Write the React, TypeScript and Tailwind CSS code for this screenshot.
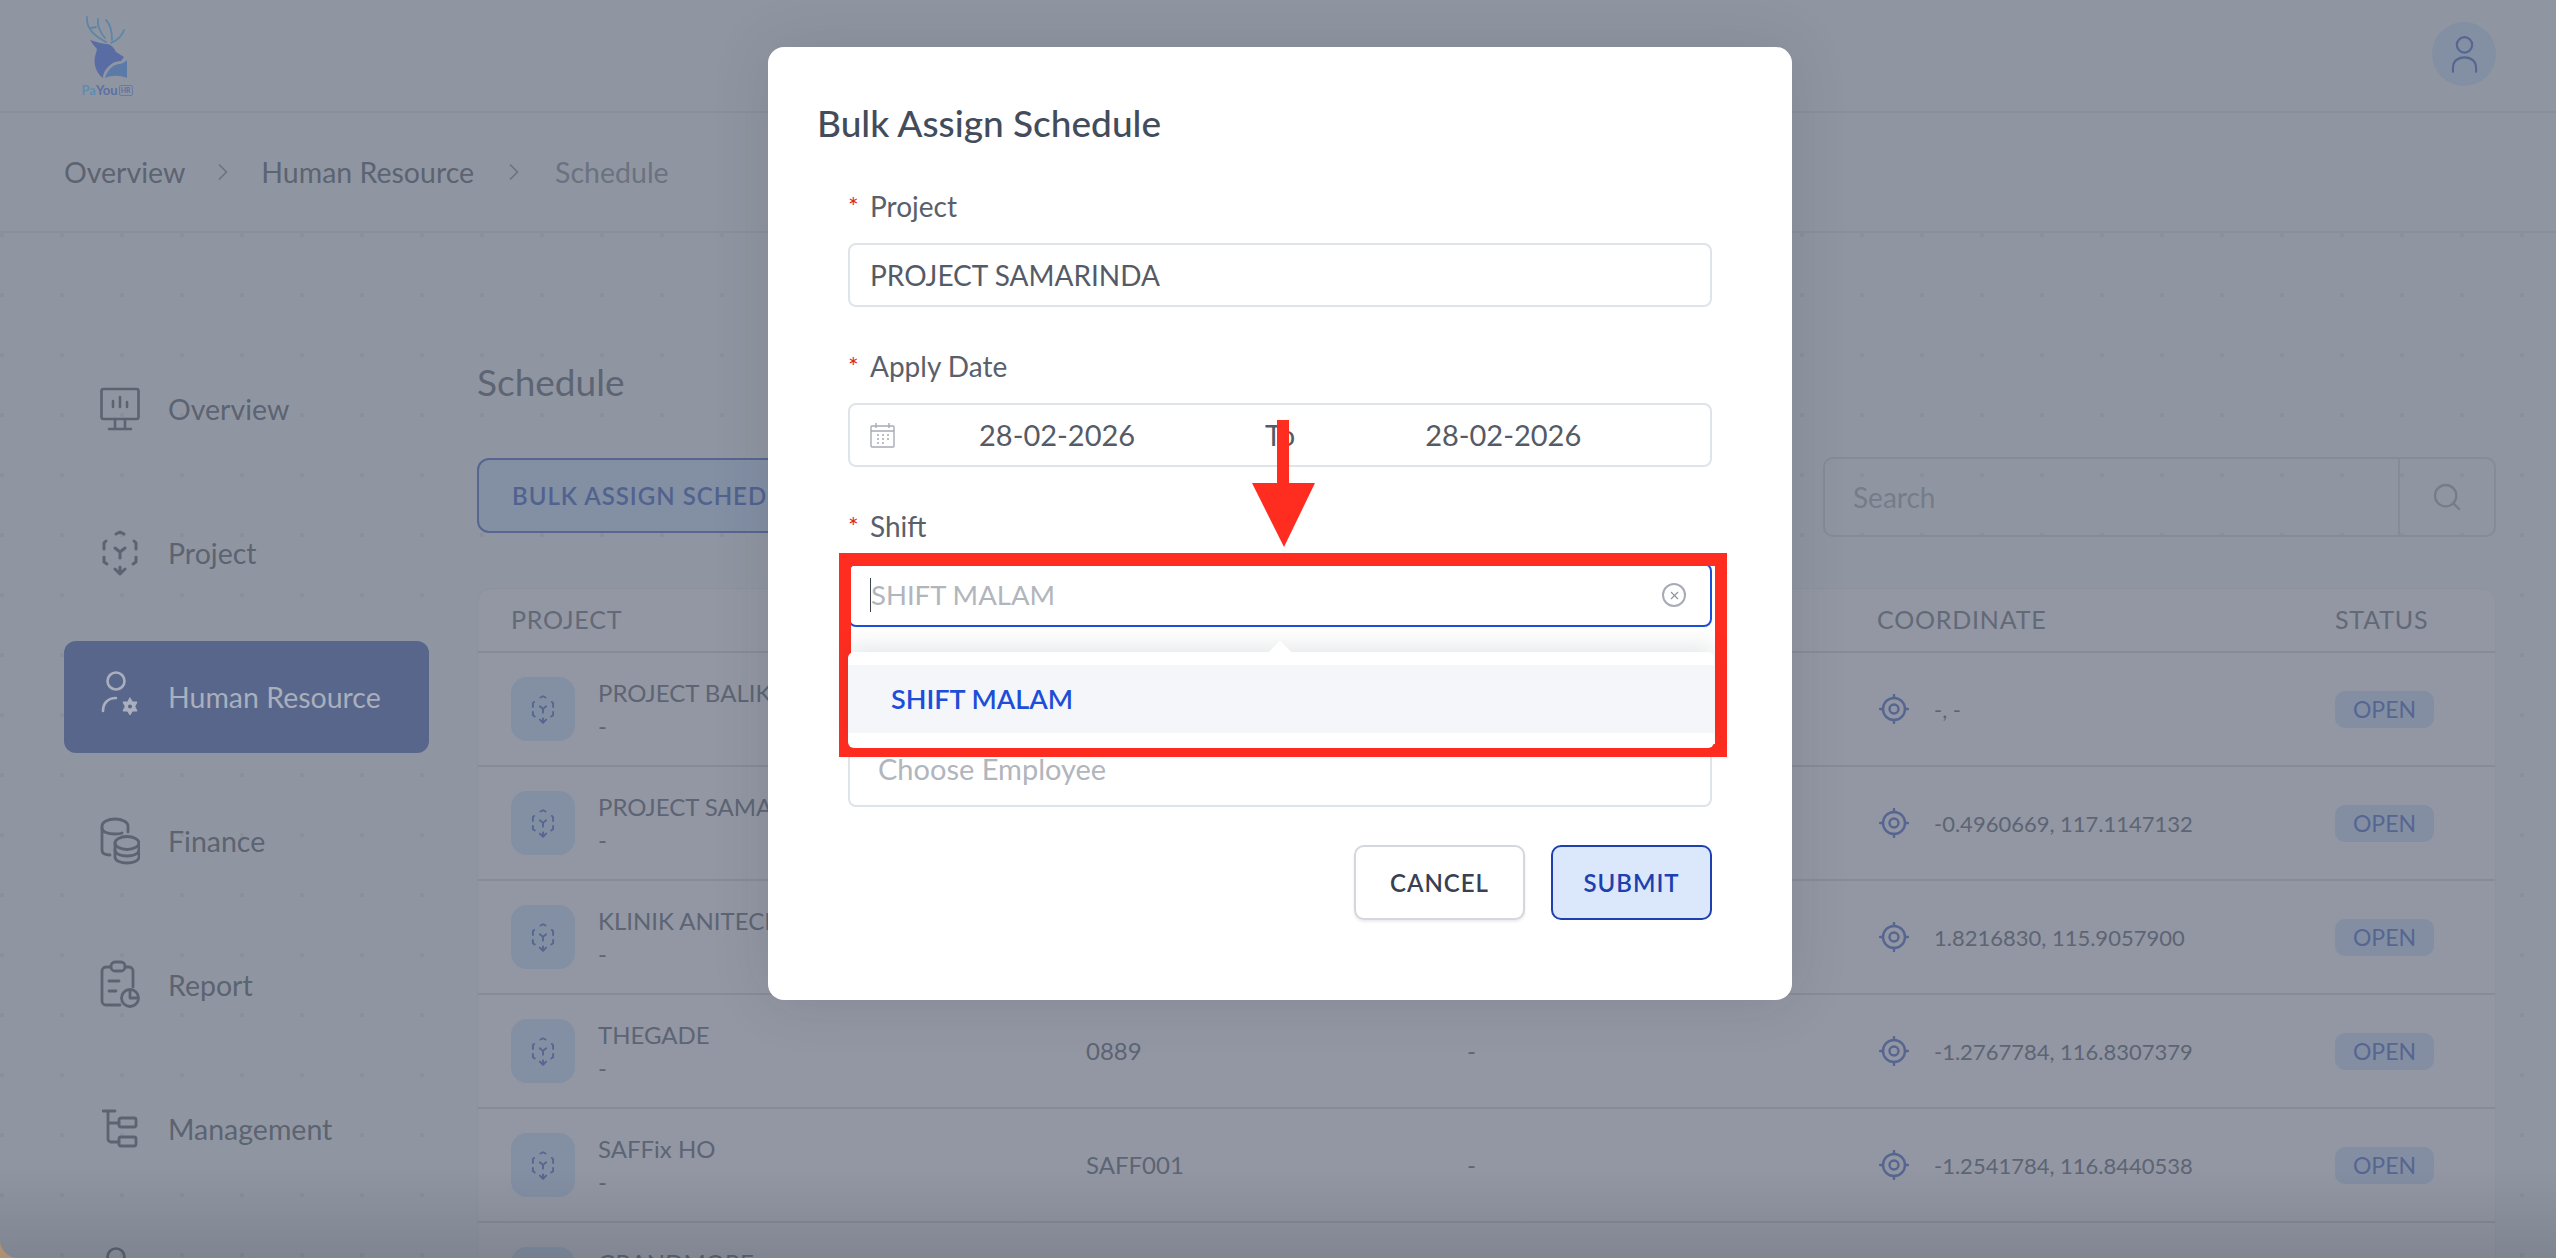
import { ChevronRight, Search, X } from "lucide-react";

type IconProps = { className?: string };

const MonitorIcon = ({ className }: IconProps) => (
    <svg viewBox="0 0 40 44" fill="none" stroke="currentColor" strokeWidth="2.6" strokeLinecap="round" strokeLinejoin="round" className={className}>
        <rect x="1.5" y="2" width="37" height="30" rx="2" />
        <path d="M13 20v-6M20 20V10M27 20v-5" />
        <path d="M15 32v9M25 32v9M9 42h22" />
    </svg>
);

const CubeIcon = ({ className }: IconProps) => (
    <svg viewBox="0 0 36 46" fill="none" stroke="currentColor" strokeWidth="3" strokeLinecap="round" strokeLinejoin="round" className={className}>
        <path d="M14 4l4-2 4 2" />
        <path d="M4 11l-2 2v6" />
        <path d="M32 11l2 2v6" />
        <path d="M2 27v5l3 2" />
        <path d="M34 27v5l-3 2" />
        <path d="M13 39l5 5 5-5M18 37v6" />
        <path d="M13 18l5 4 5-4M18 22v6" />
    </svg>
);

const HrIcon = ({ className }: IconProps) => (
    <svg viewBox="0 0 38 52" fill="none" stroke="currentColor" strokeWidth="2.6" strokeLinecap="round" strokeLinejoin="round" className={className}>
        <circle cx="15" cy="10" r="8.5" />
        <path d="M2 40c0-8 5-13 13-13" />
        <path d="M29 27l2.500 4h4.500l-2.200 4.500 2.200 4.500h-4.500l-2.500 4-2.500-4h-4.500l2.200-4.500-2.200-4.500h4.500z" fill="currentColor" strokeWidth="1" />
        <circle cx="29" cy="35.500" r="2" fill="#58668b" stroke="none" />
    </svg>
);

const CoinsIcon = ({ className }: IconProps) => (
    <svg viewBox="0 0 40 48" fill="none" stroke="currentColor" strokeWidth="2.8" strokeLinecap="round" strokeLinejoin="round" className={className}>
        <path d="M28 15V9c0-4-6-7-13-7S2 5 2 9v24c0 3 3 5 8 5" />
        <path d="M2 11c0 4 6 6 13 6 3 0 5 0 7-1" />
        <ellipse cx="27" cy="26" rx="12" ry="6.500" />
        <path d="M15 26v14c0 4 6 6 12 6s12-2 12-6V26" />
        <path d="M15 33c0 4 6 6 12 6s12-2 12-6" />
    </svg>
);

const ReportIcon = ({ className }: IconProps) => (
    <svg viewBox="0 0 40 50" fill="none" stroke="currentColor" strokeWidth="2.8" strokeLinecap="round" strokeLinejoin="round" className={className}>
        <path d="M11 7H6a4 4 0 0 0-4 4v30a4 4 0 0 0 4 4h14" />
        <path d="M25 7h4a4 4 0 0 1 4 4v16" />
        <rect x="11" y="2" width="14" height="9" rx="4" />
        <path d="M9 21h10M9 31h7" />
        <circle cx="30" cy="38" r="8.500" />
        <path d="M30 32v6h6" />
    </svg>
);

const TreeIcon = ({ className }: IconProps) => (
    <svg viewBox="0 0 36 40" fill="none" stroke="currentColor" strokeWidth="2.8" strokeLinecap="round" strokeLinejoin="round" className={className}>
        <path d="M1 2h12M6 2v28a3 3 0 0 0 3 3h8M6 14h11" />
        <rect x="17" y="9" width="17" height="9" rx="2" />
        <rect x="17" y="28" width="17" height="9" rx="2" />
    </svg>
);

const TargetIcon = ({ className }: IconProps) => (
    <svg viewBox="0 0 30 30" fill="none" stroke="currentColor" strokeWidth="2.4" strokeLinecap="round" className={className}>
        <circle cx="15" cy="15" r="11" />
        <circle cx="15" cy="15" r="4.500" />
        <path d="M15 1v3M15 26v3M1 15h3M26 15h3" />
    </svg>
);

const UserIcon = ({ className }: IconProps) => (
    <svg viewBox="0 0 28 40" fill="none" stroke="currentColor" strokeWidth="2.2" strokeLinecap="round" className={className}>
        <circle cx="14" cy="10" r="8" />
        <path d="M2 38V34c0-7 5-11 12-11s12 4 12 11v4" />
    </svg>
);

const CalendarIcon = ({ className }: IconProps) => (
    <svg viewBox="0 0 25 25" fill="none" stroke="currentColor" strokeWidth="1.4" className={className}>
        <rect x="1" y="3" width="23" height="21" rx="1" />
        <path d="M1 8h23M6 0v5M19 0v5" />
        <path d="M7 12h2M12 12h2M17 12h2M7 16h2M12 16h2M17 16h2M7 20h2M12 20h2" />
    </svg>
);

const Logo = () => (
    <div className="flex flex-col items-center w-[50px]">
        <svg viewBox="0 0 42 63" className="w-[42px] h-[63px]">
            <g fill="none" stroke="#5c86a8" strokeWidth="1.8" strokeLinecap="round">
                <path d="M1 1C0 12 8 20 20 26" />
                <path d="M12 3c-1 7 2 13 7 19" />
                <path d="M20 4c4 4 6 10 6 20" />
                <path d="M5 12l5-1" />
                <path d="M38 14c-2 6-6 10-13 13" />
            </g>
            <path d="M4 24l10 3 6 1c7 0 10 8 10 8l8 5-3 4c-7 0-11 4-13 6-4 4-5 8-5 11-9-6-9-18-8-21 1-4 2-8 2-8-3-3-5-6-7-9z" fill="#5a6ca4" />
            <path d="M19 62c3-9 8-13 14-14 3 0 6-2 8-4v18c-8-3-15-3-22 0z" fill="#5b7aa8" />
        </svg>
        <div className="flex items-center mt-[5px] text-[13px] leading-[12px] font-bold">
            <span className="text-[#5f8db0]">Pa</span>
            <span className="text-[#5c70a4]">You</span>
            <span className="ml-[1px] border border-[#6a7ba3] rounded-[2px] text-[7px] leading-[9px] px-[1px] text-[#5c70a4]">HR</span>
        </div>
    </div>
);

const navItems = [
    { label: "Overview", icon: <MonitorIcon className="w-[40px] h-[44px]" /> },
    { label: "Project", icon: <CubeIcon className="w-[36px] h-[46px]" /> },
    { label: "Human Resource", icon: <HrIcon className="w-[38px] h-[52px]" />, active: true },
    { label: "Finance", icon: <CoinsIcon className="w-[40px] h-[48px]" /> },
    { label: "Report", icon: <ReportIcon className="w-[40px] h-[50px]" /> },
    { label: "Management", icon: <TreeIcon className="w-[36px] h-[40px]" /> },
    { label: "Attendance", icon: <HrIcon className="w-[38px] h-[52px]" /> },
];

const rows = [
    { name: "PROJECT BALIKPAPAN", code: "-", coordinate: "-, -" },
    { name: "PROJECT SAMARINDA", code: "-", coordinate: "-0.4960669, 117.1147132" },
    { name: "KLINIK ANITECH", code: "-", coordinate: "1.8216830, 115.9057900" },
    { name: "THEGADE", code: "0889", coordinate: "-1.2767784, 116.8307379" },
    { name: "SAFFix HO", code: "SAFF001", coordinate: "-1.2541784, 116.8440538" },
    { name: "GRANDMORE", code: "-", coordinate: "-" },
];

const Sidebar = () => (
    <div className="w-[477px] shrink-0 pl-[64px] pt-[120px] flex flex-col gap-[32px]">
        {navItems.map((item) => (
            <div
                key={item.label}
                className={`w-[365px] h-[112px] shrink-0 rounded-[12px] flex items-center text-[28.500px] ${
                    item.active ? "bg-[#58668b] text-[#a9afbc]" : "text-[#5c6371]"
                }`}
            >
                <div className="ml-[36px] mr-[28px] w-[40px] flex justify-center">{item.icon}</div>
                <span>{item.label}</span>
            </div>
        ))}
    </div>
);

const ProjectTable = () => (
    <div className="mt-[51px] border border-[#8d929e] rounded-t-[14px] bg-[#9297a3] text-[#5d6473]">
        <div className="h-[64px] px-[33px] grid grid-cols-[575px_381px_410px_458px_1fr] items-center text-[25px] tracking-[0.8px] border-b-2 border-[#868b97] text-[#626977]">
            <span>PROJECT</span>
            <span>CODE</span>
            <span>DESCRIPTION</span>
            <span>COORDINATE</span>
            <span>STATUS</span>
        </div>
        {rows.map((row) => (
            <div
                key={row.name}
                className="h-[114px] px-[33px] grid grid-cols-[575px_381px_410px_458px_1fr] items-center text-[24px] border-b-2 border-[#868b97]"
            >
                <div className="flex items-center gap-[23px]">
                    <div className="w-[64px] h-[64px] rounded-[16px] bg-[#838fa3] flex items-center justify-center text-[#566690]">
                        <CubeIcon className="w-[24px] h-[29px]" />
                    </div>
                    <div className="leading-[32px]">
                        <div>{row.name}</div>
                        <div className="pt-px">-</div>
                    </div>
                </div>
                <span>{row.code}</span>
                <span>-</span>
                <div className="flex items-center gap-[25px] pl-[2px] text-[22px]">
                    <TargetIcon className="w-[30px] h-[30px] text-[#566690]" />
                    <span>{row.coordinate}</span>
                </div>
                <div>
                    <span className="inline-flex items-center justify-center w-[99px] h-[37px] rounded-[10px] bg-[#838ea3] text-[#566690] text-[23px]">
                        OPEN
                    </span>
                </div>
            </div>
        ))}
    </div>
);

const Field = ({ label, children }: { label: string; children: React.ReactNode }) => (
    <div className="relative h-[160px] shrink-0">
        <div className="h-[36px] flex items-center text-[28px] text-[#59606c] leading-[36px]">
            <span className="text-[#e02424] w-[22px] text-[25px]">*</span>
            <span>{label}</span>
        </div>
        <div className="relative mt-[19px]">{children}</div>
    </div>
);

const BulkAssignModal = () => (
    <div className="absolute left-[768px] top-[47px] w-[1024px] h-[953px] bg-white rounded-[16px] shadow-[0_0_60px_rgba(30,35,50,0.12)]">
        <div className="pl-[49px] pt-[54px] h-[141px] text-[37px] leading-[44px] font-medium text-[#434c5b]">
            Bulk Assign Schedule
        </div>
        <div className="px-[80px]">
            <Field label="Project">
                <div className="h-[64px] border-2 border-[#dfe3ea] rounded-[8px] flex items-center pl-[20px] text-[28px] text-[#555b66]">
                    PROJECT SAMARINDA
                </div>
            </Field>
            <Field label="Apply Date">
                <div className="h-[64px] border-2 border-[#dfe3ea] rounded-[8px] flex items-center pl-[20px] text-[29px] text-[#555b66]">
                    <CalendarIcon className="w-[25px] h-[25px] text-[#a6abb5]" />
                    <span className="ml-[84px]">28-02-2026</span>
                    <span className="ml-[130px]">To</span>
                    <span className="ml-[130px]">28-02-2026</span>
                </div>
            </Field>
            <Field label="Shift">
                <div className="h-[64px] border-2 border-[#1d4ed8] rounded-[8px] flex items-center pl-[20px] pr-[24px] text-[27.500px] text-[#b1b5bc]">
                    <div className="w-px h-[34px] bg-[#3b4252]" />
                    <span className="flex-1">SHIFT MALAM</span>
                    <div className="w-[24px] h-[24px] rounded-full border-2 border-[#a6abb5] flex items-center justify-center">
                        <X className="w-[13px] h-[13px] text-[#8e939e]" strokeWidth={2} />
                    </div>
                </div>
                <div className="absolute left-0 top-[89px] z-10 w-[866px] h-[96px] bg-white rounded-[6px] pt-[13px] shadow-[0_-8px_20px_rgba(40,50,70,0.10)]">
                    <div className="absolute left-[424px] top-[-8px] w-[16px] h-[16px] rotate-45 bg-white" />
                    <div className="relative h-[68px] bg-[#f4f6fa] flex items-center pl-[43px] text-[27px] font-semibold text-[#1d4ed8]">
                        SHIFT MALAM
                    </div>
                </div>
            </Field>
            <Field label="Employee">
                <div className="h-[84px] border-2 border-[#dfe3ea] rounded-[8px] pl-[28px] pt-[26px] text-[29px] leading-[36px] text-[#b1b5bc]">
                    Choose Employee
                </div>
            </Field>
            <div className="flex justify-end gap-[26px] mt-[17px]">
                <button className="w-[171px] h-[75px] rounded-[10px] border-2 border-[#d4d7de] bg-white text-[24px] font-semibold tracking-[1px] text-[#374151] shadow-[0_2px_3px_rgba(0,0,0,0.08)]">
                    CANCEL
                </button>
                <button className="w-[161px] h-[75px] rounded-[10px] border-2 border-[#1e40af] bg-[#dbe8fc] text-[24px] font-semibold tracking-[1px] text-[#1e40af]">
                    SUBMIT
                </button>
            </div>
        </div>
    </div>
);

const App = () => {
    return (
        <div className="relative w-[2556px] h-[1258px] overflow-hidden bg-[#c9a27c] font-[Lato,sans-serif]">
            <div className="w-full h-full overflow-hidden rounded-bl-[18px] bg-[#9096a1] flex flex-col">
                <header className="h-[113px] shrink-0 border-b-2 border-[#8a8f9b] flex items-start justify-between pl-[82px] pr-[60px] pt-[16px]">
                    <Logo />
                    <div className="w-[64px] h-[64px] mt-[6px] rounded-full bg-[#838fa3] flex items-center justify-center">
                        <UserIcon className="w-[27px] h-[39px] text-[#566690]" />
                    </div>
                </header>
                <div className="h-[120px] shrink-0 border-b-2 border-[#8a8f9b] flex items-center pl-[64px] text-[28.500px] text-[#5c6371]">
                    <span>Overview</span>
                    <ChevronRight className="w-[28px] h-[28px] ml-[24px] mr-[24px] text-[#6d7381]" strokeWidth={1.5} />
                    <span>Human Resource</span>
                    <ChevronRight className="w-[28px] h-[28px] ml-[26px] mr-[27px] text-[#6d7381]" strokeWidth={1.5} />
                    <span className="text-[#6b7280]">Schedule</span>
                </div>
                <div className="flex flex-1 min-h-0 bg-[radial-gradient(circle,#8a8f9b_2px,transparent_2.5px)] bg-[size:60px_60px] bg-[position:32px_-28px]">
                    <Sidebar />
                    <main className="flex-1 pr-[60px] pt-[127px]">
                        <h1 className="h-[44px] text-[37px] leading-[44px] text-[#5d6473]">Schedule</h1>
                        <div className="mt-[53px] flex justify-between items-start">
                            <div className="w-[420px] h-[75px] mt-px rounded-[12px] border-2 border-[#566690] bg-[#838fa3] pl-[33px] flex items-center text-[24px] font-semibold tracking-[1px] text-[#52628f]">
                                BULK ASSIGN SCHEDULE
                            </div>
                            <div className="w-[673px] h-[80px] rounded-[10px] border-2 border-[#868b97] flex items-center">
                                <span className="flex-1 pl-[28px] text-[28px] text-[#767c89]">Search</span>
                                <div className="w-[96px] h-full border-l-2 border-[#868b97] flex items-center justify-center">
                                    <Search className="w-[32px] h-[32px] text-[#767c89]" strokeWidth={1.75} />
                                </div>
                            </div>
                        </div>
                        <ProjectTable />
                    </main>
                </div>
            </div>

            <div className="absolute left-0 right-0 bottom-0 h-[90px] bg-gradient-to-t from-[#1f2433]/15 to-transparent" />

            <BulkAssignModal />

            {/* annotation drawn over the screenshot */}
            <div className="absolute left-[839px] top-[553px] w-[888px] h-[204px] border-x-[12px] border-y-[13px] border-[#ff2d20]" />
            <svg viewBox="0 0 63 127" className="absolute left-[1252px] top-[420px] w-[63px] h-[127px]">
                <path d="M25 0h12v63h26L32 127 0 63h25z" fill="#ff2d20" />
            </svg>
        </div>
    );
};

export default App;
